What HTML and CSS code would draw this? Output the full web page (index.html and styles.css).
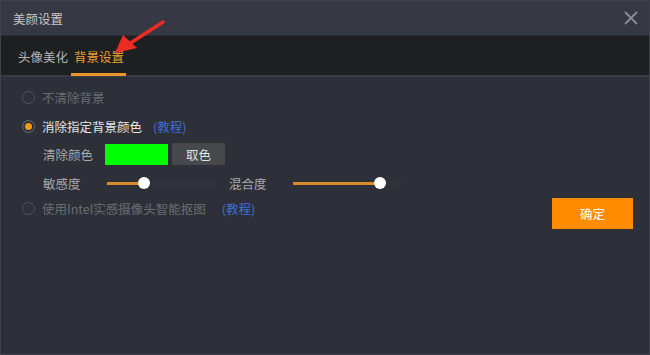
FILE: index.html
```html
<!DOCTYPE html>
<html>
<head>
<meta charset="utf-8">
<link rel="stylesheet" href="styles.css">
</head>
<body>
<div class="window">
  <div class="titlebar">
    <span class="title">美颜设置</span>
    <svg class="close" width="14" height="14" viewBox="0 0 14 14"><path d="M1 1L13 13M13 1L1 13" stroke="#8a8d93" stroke-width="1.8"/></svg>
  </div>
  <div class="tabs">
    <span class="tab">头像美化</span>
    <span class="tab active">背景设置</span>
  </div>
  <div class="content">
    <div class="row r1">
      <span class="radio"></span><span class="label dim">不清除背景</span>
    </div>
    <div class="row r2">
      <span class="radio checked"></span><span class="label bright">消除指定背景颜色</span><span class="link l1">(教程)</span>
    </div>
    <div class="row r3">
      <span class="label sub">清除颜色</span>
      <span class="swatch"></span>
      <span class="pick">取色</span>
    </div>
    <div class="row r4">
      <span class="label sub w1">敏感度</span>
      <div class="slider"><div class="fill" style="width:37px"></div><div class="thumb" style="left:37px"></div></div>
      <span class="label sub w2">混合度</span>
      <div class="slider"><div class="fill" style="width:87px"></div><div class="thumb" style="left:87px"></div></div>
    </div>
    <div class="row r5">
      <div class="left">
        <span class="radio"></span><span class="label dim">使用Intel实感摄像头智能抠图</span><span class="link l2">(教程)</span>
      </div>
      <span class="ok">确定</span>
    </div>
  </div>
  <svg class="arrow" width="60" height="45" viewBox="0 0 60 45"><path d="M51 4L17 26" stroke="#ee2b25" stroke-width="3.5" stroke-linecap="round"/><path d="M3 35L11 17L25 30Z" fill="#ee2b25"/></svg>
</div>
</body>
</html>
```
FILE: styles.css
```css
* { box-sizing: border-box; }
html, body { margin: 0; padding: 0; }
body { width: 650px; height: 355px; overflow: hidden; background: #2d3038; font-family: "Noto Sans CJK SC", "Microsoft YaHei", sans-serif; font-size: 12.5px; }
.window { position: relative; width: 650px; height: 355px; background: #2d3038; border: 1px solid #3f424a; }
.titlebar { height: 35px; background: #363943; display: flex; align-items: center; justify-content: space-between; padding: 0 11px 0 12px; border-bottom: 1px solid #2a2c33; }
.title { color: #c6c7c9; }
.close { display: block; }
.tabs { height: 41px; background: #1e1f20; display: flex; align-items: stretch; padding-left: 17px; gap: 3px; border-bottom: 2px solid #393c44; }
.tab { color: #b6b7b8; display: flex; align-items: center; padding-top: 1px; }
.tab.active { color: #f0a133; border-bottom: 3px solid #e8962e; padding-top: 4px; margin-bottom: -1px; padding-left: 3px; padding-right: 2px; margin-left: 0; }
.content { padding: 10px 16px 0 21px; }
.row { display: flex; align-items: center; height: 20px; }
.r2 { margin-top: 9px; }
.r3 { margin-top: 7px; height: 22px; padding-left: 21px; }
.r4 { margin-top: 8px; padding-left: 21px; }
.r5 { margin-top: 5px; align-items: flex-start; justify-content: space-between; height: 31px; }
.left { display: flex; align-items: center; height: 20px; }
.radio { width: 13px; height: 13px; border-radius: 50%; border: 1px solid #50535a; margin-right: 7px; display: flex; align-items: center; justify-content: center; flex: none; }
.radio.checked { border-color: #6a6d73; }
.radio.checked::after { content: ""; width: 7px; height: 7px; border-radius: 50%; background: #f29a12; }
.label.dim { color: #6b6d72; }
.label.bright { color: #e6e6e6; }
.label.sub { color: #a9aaad; }
.link { color: #3d6fd6; }
.l1 { margin-left: 11px; }
.l2 { margin-left: 16px; }
.swatch { width: 63px; height: 21px; background: #00ff00; margin-left: 12px; }
.pick { width: 53px; height: 22px; background: #47484b; color: #e2e2e2; margin-left: 4px; display: flex; align-items: center; justify-content: center; }
.w1 { width: 64px; }
.w2 { width: 64px; }
.slider { position: relative; width: 111px; height: 3px; background: #2f3239; margin-right: 11px; }
.fill { height: 3px; background: #d98a2c; }
.thumb { position: absolute; top: -5px; width: 12px; height: 12px; border-radius: 50%; background: #ffffff; margin-left: -6px; }
.ok { width: 81px; height: 31px; background: #ff8c00; color: #ffffff; display: flex; align-items: center; justify-content: center; }
.arrow { position: absolute; left: 111px; top: 17px; }
```
